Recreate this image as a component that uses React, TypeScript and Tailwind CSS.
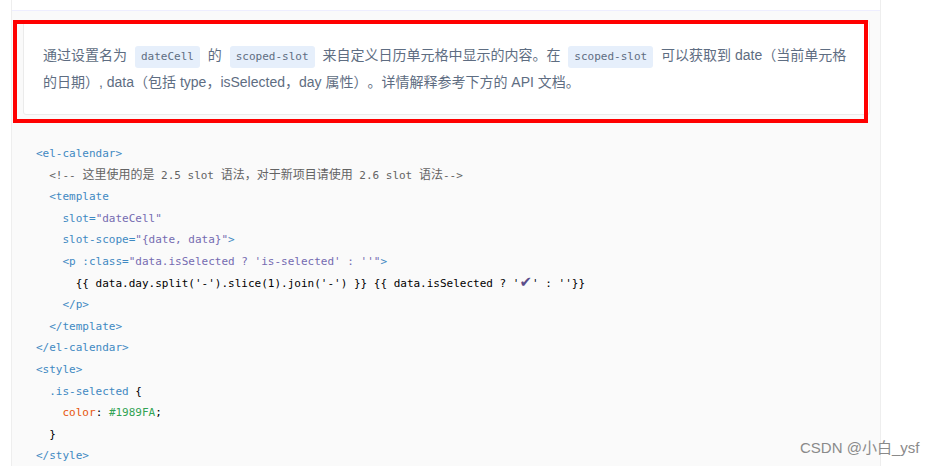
import React from 'react';

const Tag: React.FC<{ children: React.ReactNode }> = ({ children }) => <span className="text-[#3f89c2]">{children}</span>;
const Str: React.FC<{ children: React.ReactNode }> = ({ children }) => <span className="text-[#756bb1]">{children}</span>;
const Cjk: React.FC<{ children: React.ReactNode }> = ({ children }) => <span className="font-['Noto_Sans_CJK_SC',sans-serif] text-[12px] leading-none">{children}</span>;

const InlineCode: React.FC<{ children: React.ReactNode }> = ({ children }) => (
  <code className="mx-1 inline-block rounded-[3px] bg-[#e6effb] px-[6px] align-baseline font-['DejaVu_Sans_Mono','Liberation_Mono',monospace] text-[11px] leading-[22px] text-[#5e6d82]">
    {children}
  </code>
);

const CodeLine: React.FC<{ indent?: number; children: React.ReactNode }> = ({ indent = 0, children }) => (
  <div className="h-[21.6px] whitespace-pre">
    {' '.repeat(indent)}
    {children}
  </div>
);

export default function App() {
  return (
    <div className="relative h-[466px] w-[936px] overflow-hidden bg-white">
      <div className="ml-[11px] h-full w-[870px] border-x border-[#eeeeee]">
        <div className="h-[11px] border-b border-[#eeeeff]" />
        <div className="h-[455px] bg-[#fafafa] pl-[11px] pr-[10px] pt-[9px]">
          <div className="h-[95px] rounded-[3px] border border-[#ebebeb] bg-white pl-[19px] pr-[20px] pt-[21px] font-['Liberation_Sans','Noto_Sans_CJK_SC',sans-serif] text-[14px] leading-[27px] text-[#5e6d82] [text-spacing-trim:space-all]">
            通过设置名为 <InlineCode>dateCell</InlineCode> 的 <InlineCode>scoped-slot</InlineCode> 来自定义日历单元格中显示的内容。在 <InlineCode>scoped-slot</InlineCode> 可以获取到 date（当前单元格的日期）, data（包括 type，isSelected，day 属性）。详情解释参考下方的 API 文档。
          </div>
          <div className="pl-[13px] pt-[28px] font-['DejaVu_Sans_Mono','Noto_Sans_CJK_SC',monospace] text-[11px] leading-[21.6px] text-black">
            <CodeLine><Tag>&lt;el-calendar&gt;</Tag></CodeLine>
            <CodeLine indent={2}><span className="text-[#636363]">&lt;!-- <Cjk>这里使用的是</Cjk> 2.5 slot <Cjk>语法，对于新项目请使用</Cjk> 2.6 slot <Cjk>语法</Cjk>--&gt;</span></CodeLine>
            <CodeLine indent={2}><Tag>&lt;template</Tag></CodeLine>
            <CodeLine indent={4}><Tag>slot=</Tag><Str>"dateCell"</Str></CodeLine>
            <CodeLine indent={4}><Tag>slot-scope=</Tag><Str>"{'{'}date, data{'}'}"</Str><Tag>&gt;</Tag></CodeLine>
            <CodeLine indent={4}><Tag>&lt;p :class=</Tag><Str>"data.isSelected ? 'is-selected' : ''"</Str><Tag>&gt;</Tag></CodeLine>
            <CodeLine indent={6}>{"{{ data.day.split('-').slice(1).join('-') }} {{ data.isSelected ? '"}<span className="font-['DejaVu_Sans',sans-serif] text-[15px] leading-none text-[#5b4d8a]">✔</span>{"' : ''}}"}</CodeLine>
            <CodeLine indent={4}><Tag>&lt;/p&gt;</Tag></CodeLine>
            <CodeLine indent={2}><Tag>&lt;/template&gt;</Tag></CodeLine>
            <CodeLine><Tag>&lt;/el-calendar&gt;</Tag></CodeLine>
            <CodeLine><Tag>&lt;style&gt;</Tag></CodeLine>
            <CodeLine indent={2}><Tag>.is-selected</Tag> {'{'}</CodeLine>
            <CodeLine indent={4}><span className="text-[#e6550d]">color</span>: <span className="text-[#31a354]">#1989FA</span>;</CodeLine>
            <CodeLine indent={2}>{'}'}</CodeLine>
            <CodeLine><Tag>&lt;/style&gt;</Tag></CodeLine>
          </div>
        </div>
      </div>
      <div className="pointer-events-none absolute left-[13px] top-[20px] h-[103px] w-[855px] border-4 border-[#ff0000]" />
      <div className="absolute left-[800px] top-[439px] font-['Liberation_Sans','Noto_Sans_CJK_SC',sans-serif] text-[15px] leading-[18px] text-[#8a8a8a]">
        CSDN @小白_ysf
      </div>
    </div>
  );
}
